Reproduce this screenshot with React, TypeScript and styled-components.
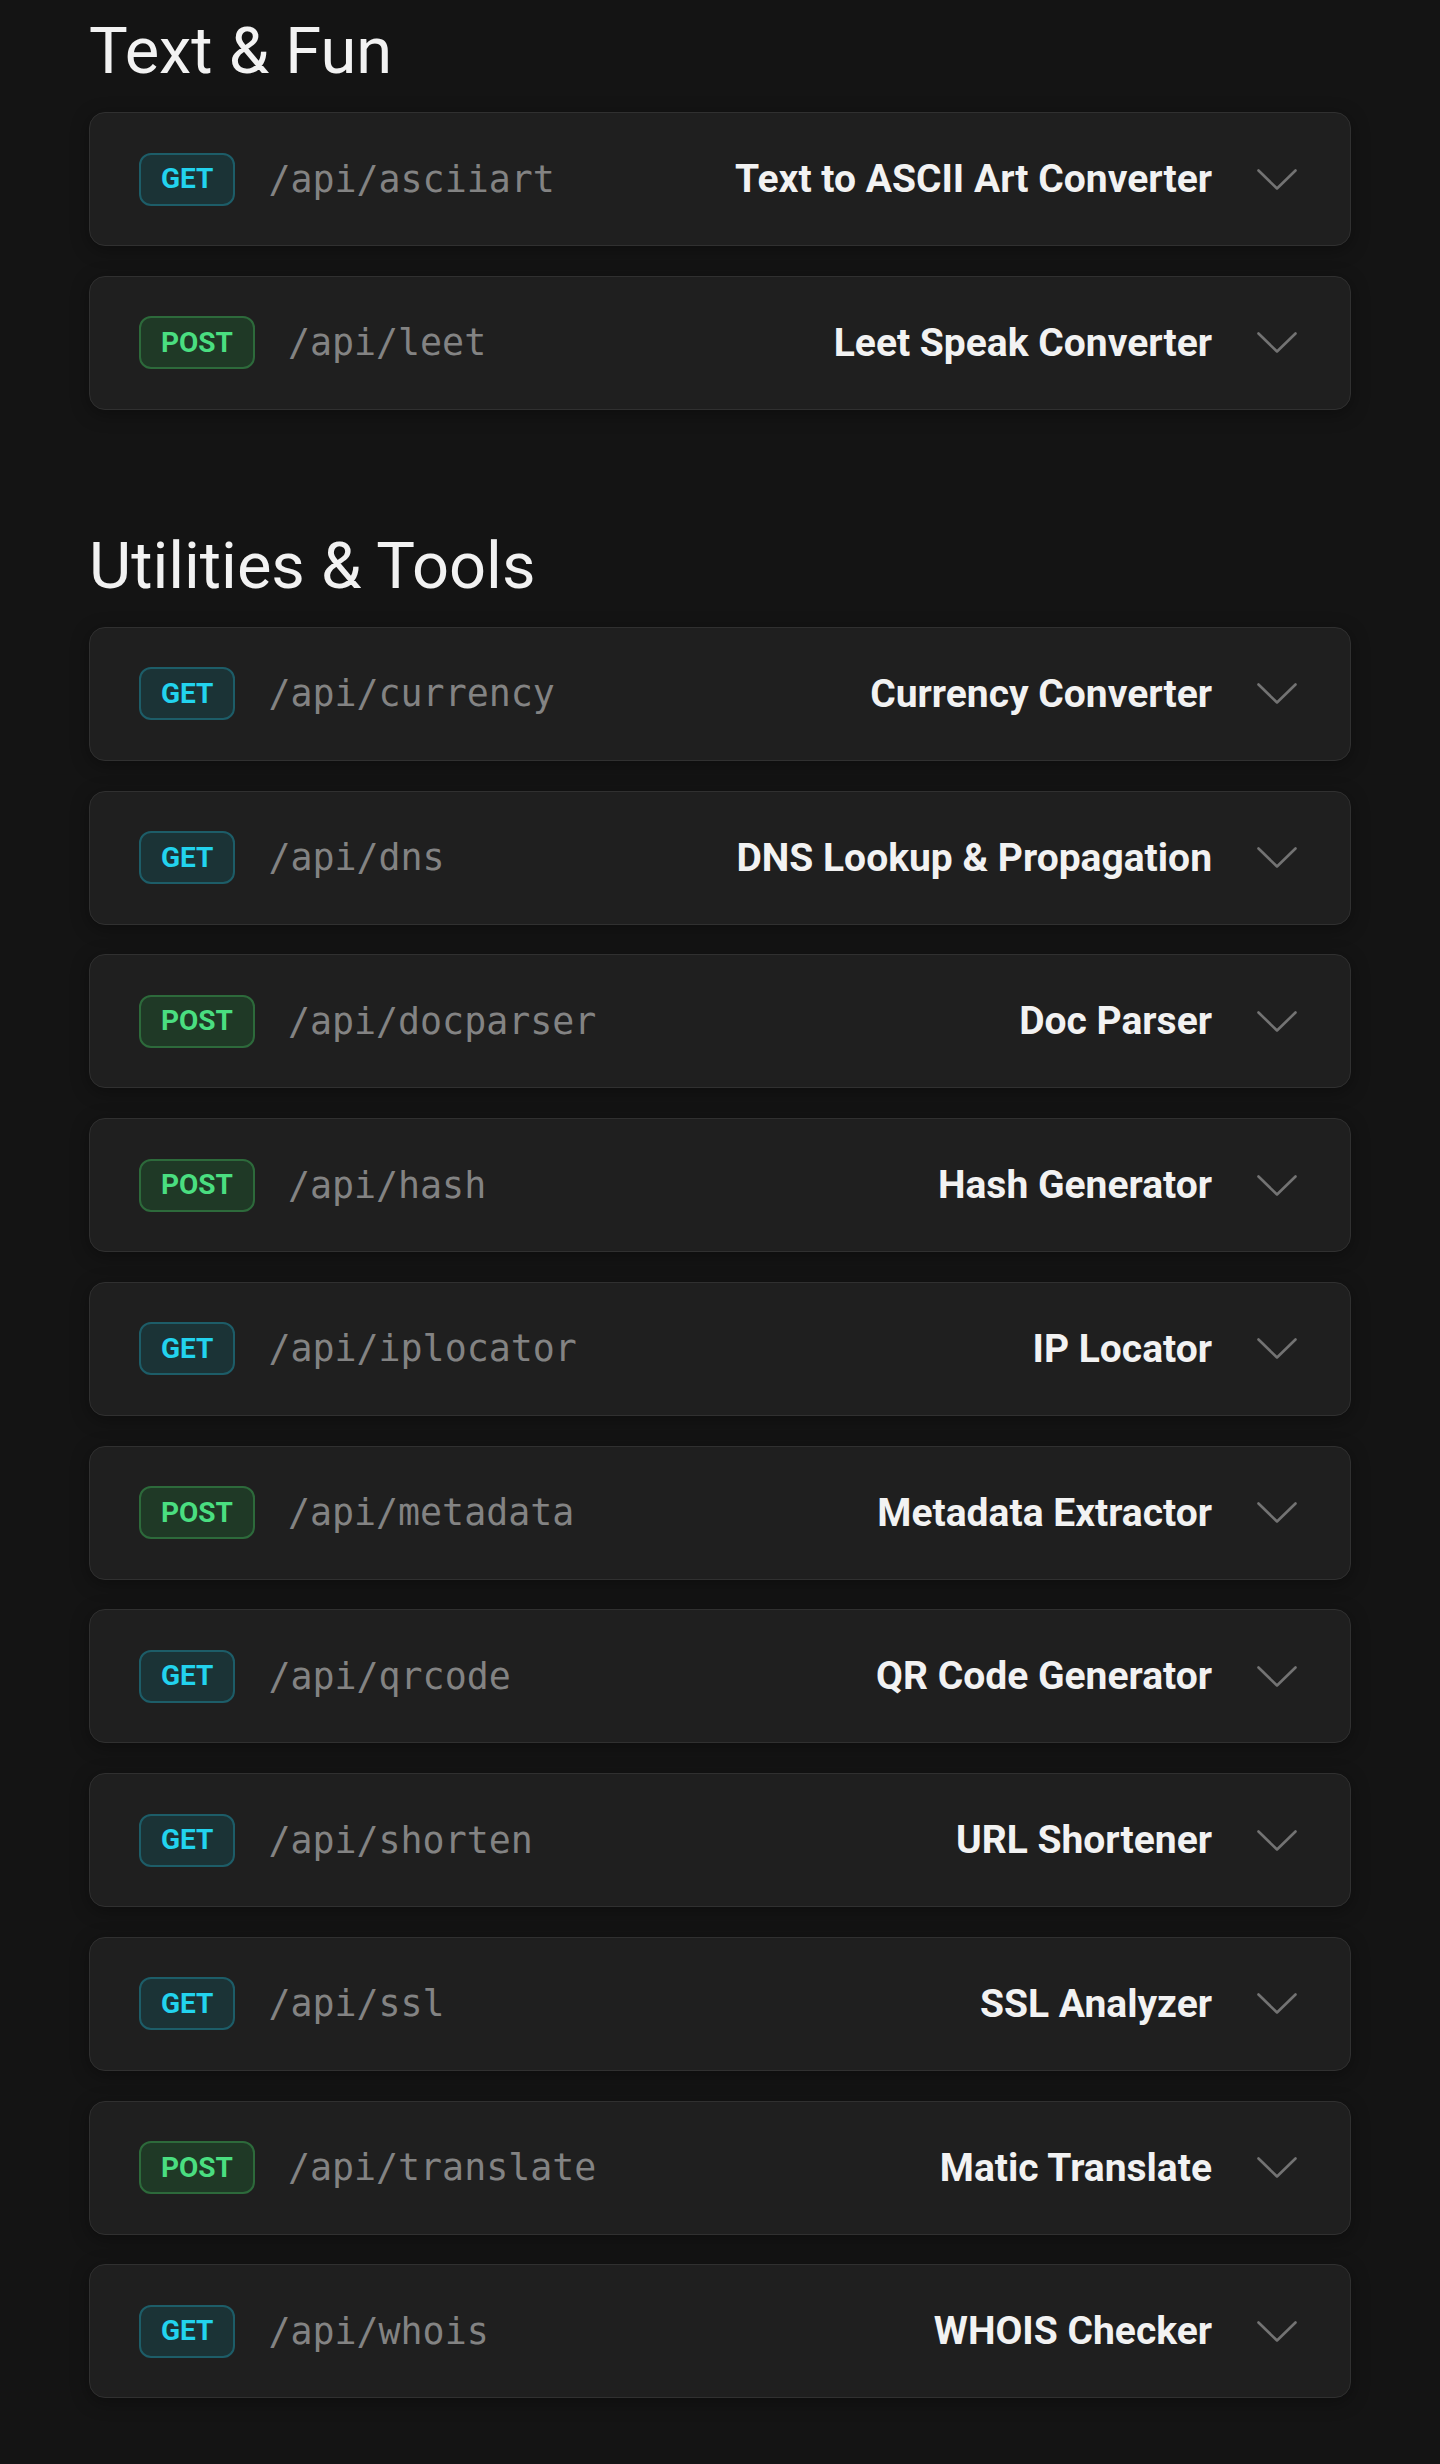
import React from "react";
import styled, { createGlobalStyle } from "styled-components";

const GlobalStyle = createGlobalStyle`
  html, body {
    margin: 0;
    padding: 0;
    background: #141414;
  }
  body {
    font-family: Roboto, "Noto Sans", Arial, sans-serif;
    color: #f2f2f2;
  }
`;

const Page = styled.main`
  padding: 13px 89px 40px;
  min-height: 2464px;
  box-sizing: border-box;
  background: #141414;
`;

const Section = styled.section`
  & + & {
    margin-top: 118px;
  }
`;

const SectionTitle = styled.h2`
  margin: 0 0 23px;
  font-family: Roboto, Arial, sans-serif;
  font-weight: 400;
  font-size: 65px;
  line-height: 76px;
  color: #f2f2f2;
`;

const List = styled.div`
  display: flex;
  flex-direction: column;
  gap: 29.75px;
`;

const Card = styled.div`
  box-sizing: border-box;
  height: 134px;
  display: flex;
  align-items: center;
  padding: 0 53px 0 49px;
  background: #1f1f1f;
  border: 1px solid #303030;
  border-radius: 16px;
  box-shadow: 0 4px 18px rgba(0, 0, 0, 0.35);
`;

const Left = styled.div`
  display: flex;
  align-items: center;
  gap: 33px;
`;

const Badge = styled.span<{ $method: "GET" | "POST" }>`
  box-sizing: border-box;
  display: inline-flex;
  align-items: center;
  justify-content: center;
  height: 53px;
  padding: 0 20px;
  border-radius: 12px;
  border: 2px solid ${(p) => (p.$method === "GET" ? "#1d5d68" : "#2d6a3b")};
  background: ${(p) => (p.$method === "GET" ? "#1b3336" : "#1f3926")};
  color: ${(p) => (p.$method === "GET" ? "#22d3ee" : "#4ade80")};
  font-family: Roboto, Arial, sans-serif;
  font-weight: 700;
  font-size: 28px;
  line-height: 1;
`;

const Path = styled.span`
  font-family: "DejaVu Sans Mono", "Liberation Mono", monospace;
  font-size: 36.6px;
  color: #838383;
`;

const Title = styled.span`
  margin-left: auto;
  font-family: Roboto, Arial, sans-serif;
  font-weight: 700;
  font-size: 39px;
  color: #f2f2f2;
`;

const ChevronBox = styled.span`
  display: flex;
  align-items: center;
  margin-left: 45px;
  color: #737373;
`;

const Chevron = () => (
  <ChevronBox>
    <svg width="40" height="21" viewBox="0 0 40 21" fill="none">
      <polyline
        points="1.5,1.5 20,19.5 38.5,1.5"
        stroke="currentColor"
        strokeWidth="2.6"
        strokeLinecap="round"
        strokeLinejoin="round"
      />
    </svg>
  </ChevronBox>
);

type Endpoint = { method: "GET" | "POST"; path: string; title: string };

const sections: { name: string; items: Endpoint[] }[] = [
  {
    name: "Text & Fun",
    items: [
      { method: "GET", path: "/api/asciiart", title: "Text to ASCII Art Converter" },
      { method: "POST", path: "/api/leet", title: "Leet Speak Converter" },
    ],
  },
  {
    name: "Utilities & Tools",
    items: [
      { method: "GET", path: "/api/currency", title: "Currency Converter" },
      { method: "GET", path: "/api/dns", title: "DNS Lookup & Propagation" },
      { method: "POST", path: "/api/docparser", title: "Doc Parser" },
      { method: "POST", path: "/api/hash", title: "Hash Generator" },
      { method: "GET", path: "/api/iplocator", title: "IP Locator" },
      { method: "POST", path: "/api/metadata", title: "Metadata Extractor" },
      { method: "GET", path: "/api/qrcode", title: "QR Code Generator" },
      { method: "GET", path: "/api/shorten", title: "URL Shortener" },
      { method: "GET", path: "/api/ssl", title: "SSL Analyzer" },
      { method: "POST", path: "/api/translate", title: "Matic Translate" },
      { method: "GET", path: "/api/whois", title: "WHOIS Checker" },
    ],
  },
];

export default function App() {
  return (
    <>
      <GlobalStyle />
      <Page>
        {sections.map((s) => (
          <Section key={s.name}>
            <SectionTitle>{s.name}</SectionTitle>
            <List>
              {s.items.map((it) => (
                <Card key={it.path}>
                  <Left>
                    <Badge $method={it.method}>{it.method}</Badge>
                    <Path>{it.path}</Path>
                  </Left>
                  <Title>{it.title}</Title>
                  <Chevron />
                </Card>
              ))}
            </List>
          </Section>
        ))}
      </Page>
    </>
  );
}
